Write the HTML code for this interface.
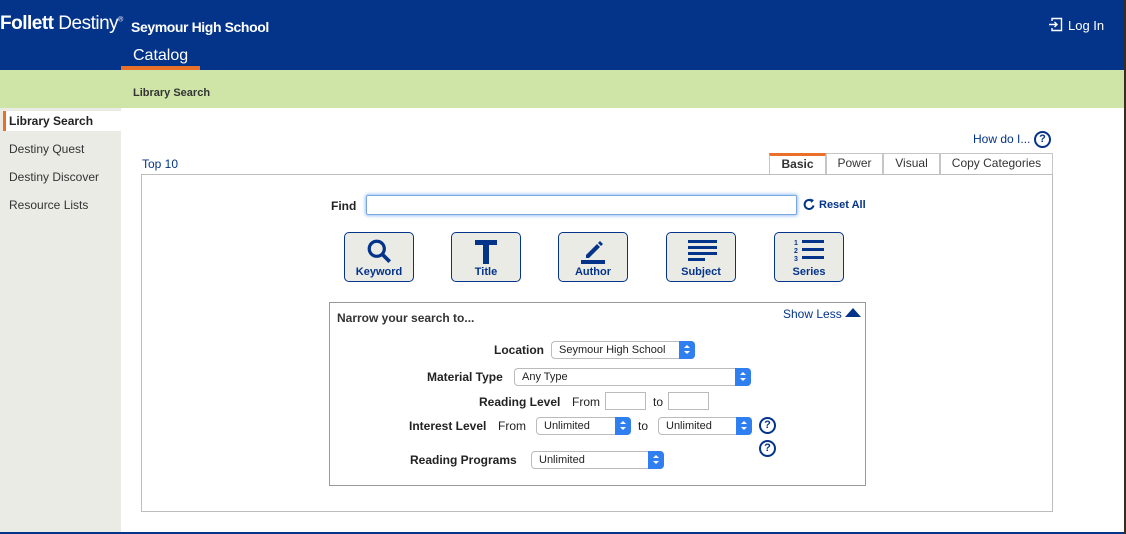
<!DOCTYPE html>
<html><head><meta charset="utf-8"><style>
*{margin:0;padding:0;box-sizing:border-box}
body{width:1126px;height:534px;overflow:hidden;background:#fff;font-family:"Liberation Sans",sans-serif;position:relative}
.a{position:absolute}
.hdr{left:0;top:0;width:1126px;height:70px;background:#04348a}
.grn{left:0;top:70px;width:1126px;height:38px;background:#cfe5a8}
.side{left:0;top:108px;width:121px;height:426px;background:#ebebe6}
.nav{left:9px;font-size:12px;color:#333}
.btn{top:232px;width:70px;height:50px;border:1px solid #04348a;border-radius:5px;background:#ebebe6;color:#04348a;font-weight:bold;font-size:11px;text-align:center}
.btn span{position:absolute;left:0;right:0;bottom:3px}
.btn svg{position:absolute;left:21px;top:5px}
.tab{top:153px;height:21px;border:1px solid #c6c6c6;border-bottom:none;font-size:12px;color:#333;text-align:center;line-height:19px;background:#fff}
.lbl{font-size:12px;font-weight:bold;color:#222}
.sel{height:18px;border:1px solid #bbb;border-radius:4px;background:#fff;font-size:11px;color:#222;padding-left:7px;line-height:16px}
.sel i{position:absolute;right:-1px;top:-1px;width:16px;height:18px;background:#2f7ff0;border-radius:0 4px 4px 0}
.sel i:before{content:"";position:absolute;left:5px;top:4px;border:3px solid transparent;border-bottom:3px solid #fff;border-top:none}
.sel i:after{content:"";position:absolute;left:5px;top:10px;border:3px solid transparent;border-top:3px solid #fff;border-bottom:none}
.q{width:17px;height:17px;border:2px solid #04348a;border-radius:50%;color:#04348a;font-size:11px;font-weight:bold;text-align:center;line-height:13px}
.txt{font-size:12px;color:#222}
</style></head><body>
<div class="a hdr"></div>
<div class="a" style="left:0;top:13px;color:#fff;font-size:19px;letter-spacing:-0.5px"><b>Follett</b> Destiny<sup style="font-size:7px">®</sup></div>
<div class="a" style="left:131px;top:19px;color:#fff;font-size:14px;font-weight:bold;letter-spacing:-0.4px">Seymour High School</div>
<div class="a" style="left:133px;top:47px;color:#fff;font-size:16px">Catalog</div>
<div class="a" style="left:121px;top:66px;width:79px;height:4px;background:#e8702a"></div>
<svg class="a" style="left:1048px;top:17px" width="15" height="15" viewBox="0 0 15 15"><path d="M4 4V1.5h9.5v12H4V11M1 7.5h8M6.5 5l2.5 2.5-2.5 2.5" stroke="#fff" stroke-width="1.4" fill="none"/></svg>
<div class="a" style="left:1068px;top:18px;color:#fff;font-size:13px">Log In</div>
<div class="a grn"></div>
<div class="a" style="left:133px;top:87px;font-size:11px;font-weight:bold;color:#333">Library Search</div>
<div class="a side"></div>
<div class="a" style="left:3px;top:111px;width:118px;height:20px;background:#fff;border-left:3px solid #e8702a"></div>
<div class="a nav" style="top:114px;font-weight:bold;color:#222">Library Search</div>
<div class="a nav" style="top:142px">Destiny Quest</div>
<div class="a nav" style="top:170px">Destiny Discover</div>
<div class="a nav" style="top:198px">Resource Lists</div>
<div class="a" style="left:973px;top:132px;font-size:12px;color:#04348a">How do I...</div>
<div class="a q" style="left:1034px;top:131px">?</div>
<div class="a" style="left:142px;top:157px;font-size:12px;color:#04348a">Top 10</div>
<div class="a" style="left:141px;top:174px;width:912px;height:338px;border:1px solid #bdbdbd"></div>
<div class="a tab" style="left:769px;width:57px;border-top:3px solid #e8702a;font-weight:bold;line-height:16px">Basic</div>
<div class="a tab" style="left:826px;width:57px">Power</div>
<div class="a tab" style="left:883px;width:57px">Visual</div>
<div class="a tab" style="left:940px;width:113px">Copy Categories</div>
<div class="a lbl" style="left:331px;top:199px">Find</div>
<div class="a" style="left:366px;top:195px;width:431px;height:20px;border:1px solid #7aa7e0;border-radius:2px;box-shadow:0 0 3px 1px #9cc3f5"></div>
<svg class="a" style="left:803px;top:198px" width="13" height="13" viewBox="0 0 13 13"><path d="M10.5 7.5A4.5 4.5 0 1 1 9 3" stroke="#04348a" stroke-width="2" fill="none"/><path d="M7 0.5l4 1.5-2.5 3z" fill="#04348a"/></svg>
<div class="a" style="left:819px;top:199px;font-size:11px;font-weight:bold;color:#04348a">Reset All</div>
<div class="a btn" style="left:344px"><svg width="28" height="28" viewBox="0 0 26 26"><circle cx="10" cy="10" r="7" stroke="#04348a" stroke-width="3" fill="none"/><path d="M15 15l7 7" stroke="#04348a" stroke-width="3.5"/></svg><span>Keyword</span></div>
<div class="a btn" style="left:451px"><svg width="26" height="26" viewBox="0 0 26 26"><path d="M2 2h22v5H16v19h-6V7H2z" fill="#04348a"/></svg><span>Title</span></div>
<div class="a btn" style="left:558px"><svg width="26" height="26" viewBox="0 0 26 26"><path d="M6 17l11-11 3 3-11 11H6zM18 5l2-2 3 3-2 2z" fill="#04348a"/><rect x="1" y="22" width="24" height="4" fill="#04348a"/></svg><span>Author</span></div>
<div class="a btn" style="left:666px"><svg width="30" height="26" viewBox="0 0 30 26"><rect x="0" y="2" width="29" height="3" fill="#04348a"/><rect x="0" y="8" width="29" height="3" fill="#04348a"/><rect x="0" y="14" width="29" height="3" fill="#04348a"/><rect x="0" y="20" width="17" height="3" fill="#04348a"/></svg><span>Subject</span></div>
<div class="a btn" style="left:774px"><svg width="30" height="26" viewBox="0 0 30 26" style="left:19px"><text x="0" y="7" font-size="7" font-weight="bold" fill="#04348a" font-family="Liberation Sans">1</text><text x="0" y="15" font-size="7" font-weight="bold" fill="#04348a" font-family="Liberation Sans">2</text><text x="0" y="23" font-size="7" font-weight="bold" fill="#04348a" font-family="Liberation Sans">3</text><rect x="8" y="2" width="22" height="3" fill="#04348a"/><rect x="8" y="10" width="22" height="3" fill="#04348a"/><rect x="8" y="18" width="22" height="3" fill="#04348a"/></svg><span>Series</span></div>
<div class="a" style="left:329px;top:302px;width:537px;height:184px;border:1px solid #999"></div>
<div class="a lbl" style="left:337px;top:311px;color:#333">Narrow your search to...</div>
<div class="a" style="left:783px;top:307px;font-size:12px;color:#04348a">Show Less</div>
<div class="a" style="left:845px;top:308px;border:8px solid transparent;border-bottom:9px solid #04348a;border-top:none"></div>
<div class="a lbl" style="left:494px;top:343px">Location</div>
<div class="a sel" style="left:551px;top:341px;width:144px">Seymour High School<i></i></div>
<div class="a lbl" style="left:427px;top:370px">Material Type</div>
<div class="a sel" style="left:514px;top:368px;width:237px">Any Type<i></i></div>
<div class="a lbl" style="left:479px;top:395px">Reading Level</div>
<div class="a txt" style="left:572px;top:395px">From</div>
<div class="a" style="left:605px;top:392px;width:41px;height:18px;border:1px solid #bbb"></div>
<div class="a txt" style="left:653px;top:395px">to</div>
<div class="a" style="left:668px;top:392px;width:41px;height:18px;border:1px solid #bbb"></div>
<div class="a lbl" style="left:409px;top:419px">Interest Level</div>
<div class="a txt" style="left:498px;top:419px">From</div>
<div class="a sel" style="left:536px;top:417px;width:95px">Unlimited<i></i></div>
<div class="a txt" style="left:638px;top:419px">to</div>
<div class="a sel" style="left:658px;top:417px;width:94px">Unlimited<i></i></div>
<div class="a q" style="left:759px;top:417px">?</div>
<div class="a q" style="left:759px;top:440px">?</div>
<div class="a lbl" style="left:410px;top:453px">Reading Programs</div>
<div class="a sel" style="left:531px;top:451px;width:133px">Unlimited<i></i></div>
<div class="a" style="left:0;top:532px;width:1126px;height:2px;background:#04348a"></div>
<div class="a" style="left:1124px;top:0;width:2px;height:534px;background:#3a2a20"></div>
</body></html>
